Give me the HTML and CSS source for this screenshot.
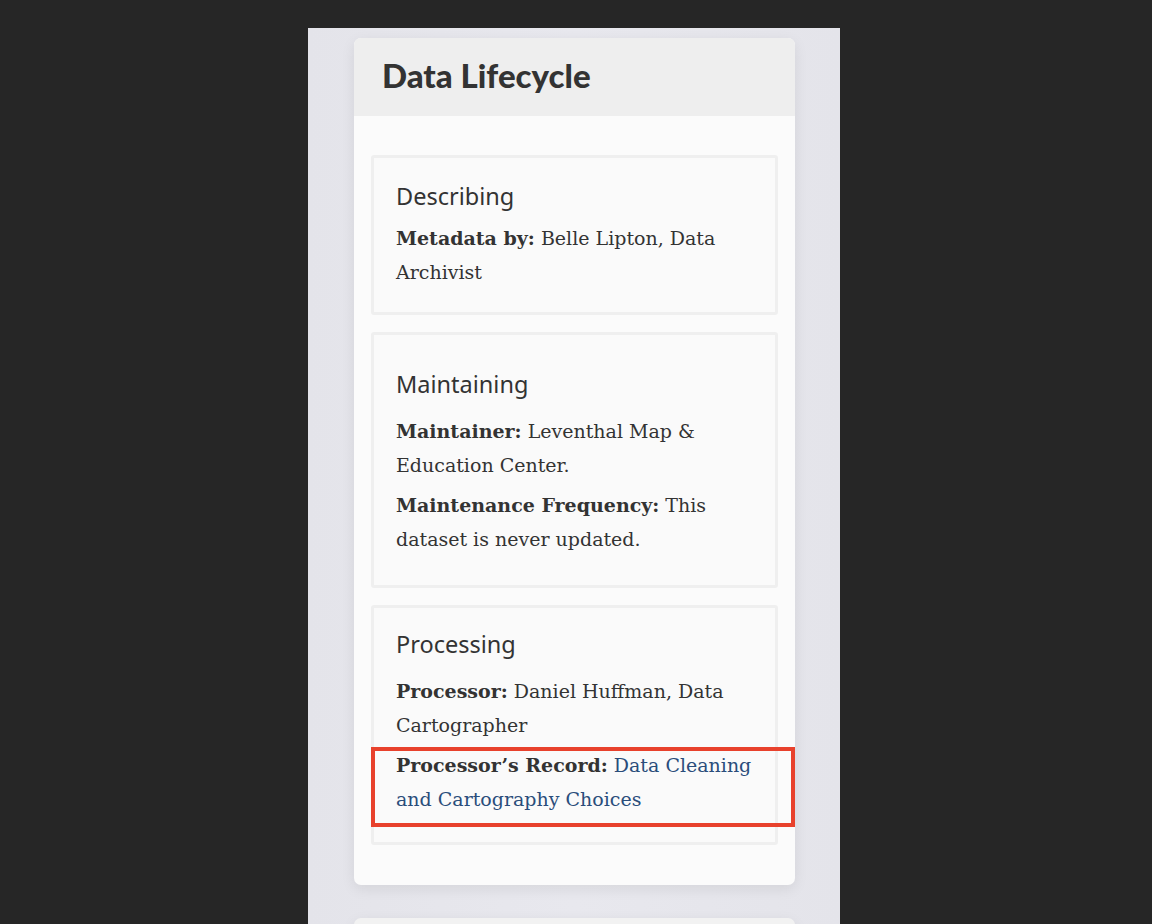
FILE: index.html
```html
<!DOCTYPE html>
<html lang="en">
<head>
<meta charset="utf-8">
<title>Data Lifecycle</title>
<link rel="stylesheet" href="styles.css">
</head>
<body>
<div class="panel">
  <section class="card">
    <header class="card-head"><h2 class="card-title">Data Lifecycle</h2></header>
    <div class="card-body">
      <div class="box box-first">
        <h3 class="box-title">Describing</h3>
        <p class="row"><b>Metadata by:</b> Belle Lipton, Data Archivist</p>
      </div>
      <div class="box box-mid">
        <h3 class="box-title">Maintaining</h3>
        <p class="row"><b>Maintainer:</b> Leventhal Map &amp; Education Center.</p>
        <p class="row"><b>Maintenance Frequency:</b> This dataset is never updated.</p>
      </div>
      <div class="box box-last">
        <h3 class="box-title">Processing</h3>
        <p class="row"><b>Processor:</b> Daniel Huffman, Data Cartographer</p>
        <p class="row row-hl"><b>Processor’s Record:</b> <a class="link" href="#">Data Cleaning and Cartography Choices</a><span class="highlight"></span></p>
      </div>
    </div>
  </section>
  <section class="card card-next"></section>
</div>
</body>
</html>
```
FILE: styles.css
```css
html, body {
  margin: 0;
  padding: 0;
  background: #262626;
  height: 100%;
  overflow: hidden;
}
body {
  font-family: "DejaVu Serif", serif;
  color: #333;
}
.panel {
  width: 532px;
  margin: 28px 0 0 308px;
  min-height: 896px;
  background: linear-gradient(90deg, #e4e4ea 0%, #e8e8ee 50%, #e4e4ea 100%);
  padding: 10px 45px 0 46px;
  box-sizing: border-box;
}
.card {
  background: #fbfbfb;
  border-radius: 7px;
  box-shadow: 0 4px 14px rgba(0,0,0,0.08);
  overflow: hidden;
}
.card-head {
  background: #eeeeee;
  height: 78px;
  display: flex;
  align-items: center;
  padding-left: 28px;
}
.card-title {
  margin: 0 0 4px 0;
  font-family: "Lato", "Noto Sans", sans-serif;
  font-weight: 900;
  font-size: 33px;
  line-height: 40px;
  color: #333;
}
.card-body {
  padding: 39px 17px 40px 17px;
  display: flex;
  flex-direction: column;
  gap: 17px;
}
.box {
  border: 3px solid #efefef;
  border-radius: 3px;
  background: #fafafa;
  padding: 21px 22px 23px 22px;
}
.box-mid { padding-top: 32px; padding-bottom: 29px; }
.box-last { padding-top: 19px; padding-bottom: 26px; }
.box-title {
  margin: 0 0 8px 0;
  font-family: "Noto Sans", sans-serif;
  font-weight: 400;
  font-size: 23.5px;
  line-height: 34px;
  color: #333;
}
.box-mid .box-title { margin-bottom: 13px; }
.box-last .box-title { margin-bottom: 13px; }
.row {
  margin: 0;
  font-size: 19px;
  line-height: 34px;
  color: #333;
}
.row + .row { margin-top: 6px; }
.row b { font-weight: 700; }
.row-hl { position: relative; }
.link {
  color: #2a4d7b;
  text-decoration: none;
}
.highlight {
  position: absolute;
  left: -25px;
  right: -42px;
  top: -1px;
  bottom: -11px;
  border: 4px solid #e8412c;
  pointer-events: none;
}
.card-next {
  margin-top: 33px;
  height: 40px;
  background: #f2f2f2;
  border-radius: 7px 7px 0 0;
}
```
